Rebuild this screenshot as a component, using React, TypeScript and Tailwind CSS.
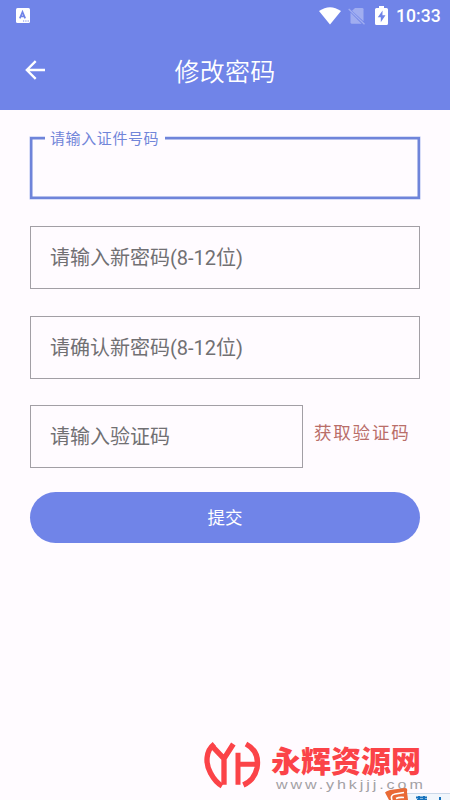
import React from "react";

const cjk = "font-[Roboto,'Noto_Sans_CJK_SC',sans-serif]";

function StatusBar() {
  return (
    <div className="flex h-[31px] items-center pl-4 pr-[10px]">
      <svg width="14" height="15" viewBox="0 0 14 15">
        <rect width="14" height="15" rx="1.5" fill="#fff" />
        <path d="M3.8 10.3 6.5 4l2.7 6.3M4.8 8.4h3.4" fill="none" stroke="#7084e8" strokeWidth="1.7" />
        <path d="M7 13h1.2M9.3 13h1.2M11.6 13h1.2" stroke="#7084e8" strokeWidth="1" />
      </svg>
      <div className="ml-auto flex items-center">
        <svg width="22" height="18" viewBox="0 0 22 18">
          <path d="M0 4Q11-3.6 22 4L11 17.5Z" fill="#fff" />
        </svg>
        <svg className="ml-[7px]" width="18" height="18" viewBox="0 0 18 18">
          <path d="M7 1h7.2q1.3 0 1.3 1.3V14.3L4 3.8Z" fill="#a0adf0" />
          <path d="M2.5 5.6 13.6 16.8H4q-1.5 0-1.5-1.5Z" fill="#a0adf0" />
          <path d="M.7 2 16.5 17.2" stroke="#a0adf0" strokeWidth="1.3" />
        </svg>
        <svg className="ml-[9px]" width="13" height="19" viewBox="0 0 13 19">
          <path d="M4 0h5v2h2.5Q13 2 13 3.5v14q0 1.5-1.5 1.5h-10Q0 19 0 17.5v-14Q0 2 1.5 2H4Z" fill="#fff" />
          <path d="M7.6 4.5 2.8 11.3h3v5l4.7-7H7.4Z" fill="#7084e8" />
        </svg>
        <span className="ml-2 mt-[2px] w-[44px] whitespace-nowrap font-[Roboto,sans-serif] text-[17.6px] font-medium leading-none text-white">10:33</span>
      </div>
    </div>
  );
}

function Field({ label, className }: { label: string; className: string }) {
  return (
    <div className={`flex h-[63px] items-center border border-[#a29fa5] pl-[19px] text-[20px] leading-none text-[#717073] ${className}`}>
      {label}
    </div>
  );
}

function Watermark() {
  return (
    <div className="absolute bottom-0 left-[200px] h-[64px] w-[250px] overflow-hidden">
      <svg className="absolute left-[1px] top-0" width="64" height="60" viewBox="0 0 192 180" fill="none" stroke="#fb4348" strokeWidth="16" strokeLinejoin="round">
        <path d="M40 24C14 44 12 82 29 112C39 131 49 142 63 150" />
        <path d="M34 31 69 68 97 24M69 62V146" />
        <path d="M111 50V146M111 85H167" strokeWidth="15" />
        <path d="M135 24C161 38 174 62 168 96C163 120 147 138 127 147" />
      </svg>
      <div className="absolute left-[71px] top-[7px] whitespace-nowrap font-['Noto_Sans_CJK_SC',sans-serif] text-[30px] font-black leading-[32px] text-[#fb4348]">永辉资源网</div>
      <div className="absolute left-[76px] top-[42px] origin-left scale-x-[1.19] whitespace-nowrap font-['Liberation_Sans',sans-serif] text-[13.5px] leading-[14px] tracking-[2.45px] text-[#a3a1a5]">www.yhkjjj.com</div>
      <div className="absolute bottom-0 right-0 h-[7px] w-[49px] border-t border-[#cbd8e9] bg-[#f1f6fc]" />
      <svg className="absolute bottom-0 right-0" width="68" height="12" viewBox="0 0 68 12">
        <path d="M3 4.5Q4 3 8 2L23 0Q26 0 25 4L26 12H7Z" fill="#e96936" />
        <path d="M10 12Q8 7 13 6L22 4.5M14 10.5Q17 9 22 9.5" fill="none" stroke="#fff" strokeWidth="1.6" />
        <path d="M34 9.5H45M37 8V12M42 8V12M35 12H45M58 9V12" stroke="#1672bd" strokeWidth="2" />
      </svg>
    </div>
  );
}

export default function App() {
  return (
    <div className={`relative h-[800px] w-[450px] overflow-hidden bg-[#fffbff] ${cjk}`}>
      <header className="h-[110px] bg-[#7084e8] text-white">
        <StatusBar />
        <div className="grid h-[79px] grid-cols-[70px_1fr_70px] items-center">
          <svg className="-mt-[2px] ml-[25px]" width="21" height="20" viewBox="0 0 21 20" fill="none" stroke="#fff" strokeWidth="2.3">
            <path d="M20 10H2M10.7 1.1 1.8 10l8.9 8.9" />
          </svg>
          <h1 className="mt-[3px] text-center text-[25px] font-[350] leading-none tracking-[0.2px]">修改密码</h1>
        </div>
      </header>
      <main className="px-[30px] pt-[27px]">
        <div className="relative h-[62px] border-2 border-[#6f84da] shadow-[inset_0_0_0_0.5px_#6f84da,0_0_0_0.5px_#b3c0f0]">
          <span className="absolute left-[13px] top-[-9px] bg-[#fffbff] pl-[5px] pr-[6px] text-[15px] leading-[18px] tracking-[0.6px] text-[#7185d9]">请输入证件号码</span>
        </div>
        <Field label="请输入新密码(8-12位)" className="mt-[27px]" />
        <Field label="请确认新密码(8-12位)" className="mt-[27px]" />
        <div className="mt-[26px] flex">
          <Field label="请输入验证码" className="w-[273px]" />
          <button className="ml-[11px] mt-[18px] h-5 whitespace-nowrap text-[17.5px] leading-5 tracking-[1.8px] text-[#b96e69]">获取验证码</button>
        </div>
        <button className="mt-[24px] flex h-[51px] w-full items-center justify-center rounded-full bg-[#7084e8] pt-[2px] text-[17.5px] leading-none text-white">提交</button>
      </main>
      <Watermark />
    </div>
  );
}
